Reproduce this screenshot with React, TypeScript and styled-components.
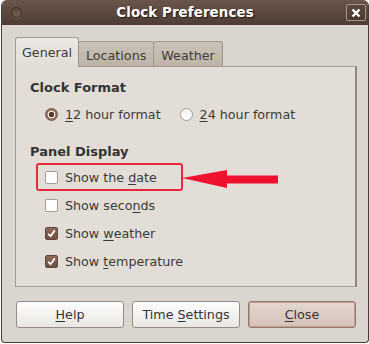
import styled, { createGlobalStyle } from 'styled-components';

const GlobalStyle = createGlobalStyle`
  html, body {
    margin: 0;
    padding: 0;
    background: #ffffff;
  }
  body {
    font-family: "DejaVu Sans", "Liberation Sans", sans-serif;
    font-size: 12.7px;
    color: #3a3a3a;
  }
`;

const Window = styled.div`
  box-sizing: border-box;
  width: 368px;
  height: 343px;
  margin-left: 1px;
  display: flex;
  flex-direction: column;
  background: #dad6cf;
  border: 1px solid #4a3f38;
  border-top: none;
  border-radius: 6px 6px 4px 4px;
  overflow: hidden;
`;

const TitleBar = styled.div`
  height: 25px;
  display: grid;
  grid-template-columns: 1fr auto 1fr;
  align-items: center;
  padding: 0 2px;
  background: linear-gradient(#6a5549, #4d3d34);
  box-sizing: border-box;
`;

const MenuDot = styled.span`
  width: 9px;
  height: 9px;
  margin-left: 7px;
  border-radius: 50%;
  border: 1px solid #3a2e28;
  background: linear-gradient(#5a473c, #73604f);
  box-shadow: 0 1px 0 rgba(255, 255, 255, 0.15);
`;

const Title = styled.div`
  color: #ffffff;
  font-weight: bold;
  font-size: 13.4px;
  text-shadow: 1px 1px 1px #1e1612;
  letter-spacing: 0.1px;
`;

const CloseBox = styled.div`
  justify-self: end;
  width: 20px;
  height: 17px;
  box-sizing: border-box;
  border: 1px solid #a6968b;
  border-radius: 2px;
  background: linear-gradient(#5c483d, #4a3a31);
  display: flex;
  align-items: center;
  justify-content: center;
`;

const Body = styled.div`
  padding: 12px 11px 0 13px;
  display: flex;
  flex-direction: column;
`;

const TabRow = styled.div`
  display: flex;
  align-items: flex-end;
  height: 30px;
  margin-bottom: -1px;
  position: relative;
  z-index: 1;
`;

const Tab = styled.div<{ $active?: boolean }>`
  box-sizing: border-box;
  padding: 0 ${(p) => (p.$active ? '6px' : '7px')};
  display: flex;
  align-items: center;
  height: ${(p) => (p.$active ? '30px' : '26px')};
  border: 1px solid ${(p) => (p.$active ? '#a39a90' : '#a0978c')};
  border-bottom: ${(p) => (p.$active ? 'none' : '1px solid #a39a90')};
  border-radius: 3px 3px 0 0;
  background: ${(p) =>
    p.$active ? 'linear-gradient(#ebe8e3, #e2ded7)' : 'linear-gradient(#cbc3b8, #bdb3a7)'};
  color: ${(p) => (p.$active ? '#3a3a3a' : '#3d3a37')};
  padding-top: ${(p) => (p.$active ? '0' : '2px')};
  margin-left: ${(p) => (p.$active ? '0' : '-1px')};
  &:first-child {
    margin-left: 0;
  }
`;

const Panel = styled.div`
  box-sizing: border-box;
  height: 221px;
  background: #e2ded7;
  border: 1px solid #a39a90;
  border-right: 2px solid #8e857b;
  padding: 12px 14px 0 14px;
  display: flex;
  flex-direction: column;
`;

const SectionTitle = styled.div`
  font-weight: bold;
  font-size: 13px;
  height: 18px;
  line-height: 18px;
  color: #333333;
`;

const RadioRow = styled.div`
  display: flex;
  gap: 19px;
  height: 28px;
  margin: 3px 0 15px 15px;
  align-items: center;
`;

const Option = styled.label`
  display: flex;
  align-items: center;
  gap: 7px;
`;

const Radio = styled.span<{ $checked?: boolean }>`
  box-sizing: border-box;
  width: 13px;
  height: 13px;
  border-radius: 50%;
  border: 1px solid ${(p) => (p.$checked ? '#6d5446' : '#a59c94')};
  background: ${(p) =>
    p.$checked
      ? 'radial-gradient(circle, #573b30 0 2.4px, #efe3dc 3px 3.6px, #957363 4.2px)'
      : 'linear-gradient(#f4f3f1, #ffffff)'};
`;

const CheckList = styled.div`
  display: flex;
  flex-direction: column;
  margin-top: 2px;
`;

const CheckRow = styled.label<{ $marked?: boolean }>`
  position: relative;
  box-sizing: border-box;
  display: flex;
  align-items: center;
  gap: 7px;
  height: 28px;
  margin-left: 6px;
  padding-left: 9px;
  width: ${(p) => (p.$marked ? '147px' : 'auto')};
  border-radius: 3px;
  box-shadow: ${(p) => (p.$marked ? 'inset 0 0 0 2px #e8283c' : 'none')};
`;

const Box = styled.span<{ $checked?: boolean }>`
  box-sizing: border-box;
  width: 13px;
  height: 13px;
  border-radius: 2px;
  border: 1px solid ${(p) => (p.$checked ? '#5f4538' : '#a39a92')};
  background: ${(p) => (p.$checked ? 'linear-gradient(#8e6a58, #6f4f40)' : '#ffffff')};
  display: flex;
  align-items: center;
  justify-content: center;
`;

const Arrow = styled.svg`
  position: absolute;
  left: 145px;
  top: 5px;
`;

const Key = styled.span`
  text-decoration: underline;
  text-underline-offset: 2px;
  text-decoration-thickness: 1px;
`;

const ButtonRow = styled.div`
  display: flex;
  gap: 8px;
  margin-top: 14px;
  padding-left: 1px;
`;

const Button = styled.div<{ $primary?: boolean }>`
  box-sizing: border-box;
  width: 108px;
  height: 27px;
  display: flex;
  align-items: center;
  justify-content: center;
  border: 1px solid ${(p) => (p.$primary ? '#8c7a72' : '#958d85')};
  border-radius: 3px;
  background: ${(p) =>
    p.$primary ? 'linear-gradient(#e4d6d0, #d5c1b9)' : 'linear-gradient(#fdfdfc, #e9e7e3)'};
  box-shadow: ${(p) => (p.$primary ? 'inset 0 0 0 1px #c99b8e' : 'inset 0 1px 0 #ffffff')};
  color: #333333;
`;

const Check = () => (
  <svg width="9" height="9" viewBox="0 0 9 9">
    <path d="M1.2 4.8 L3.6 7.2 L7.8 1.4" fill="none" stroke="#ffffff" strokeWidth="1.8" />
  </svg>
);

const App = () => (
  <>
    <GlobalStyle />
    <Window>
      <TitleBar>
        <MenuDot />
        <Title>Clock Preferences</Title>
        <CloseBox>
          <svg width="10" height="10" viewBox="0 0 10 10">
            <path d="M1.5 1.5 L8.5 8.5 M8.5 1.5 L1.5 8.5" stroke="#ffffff" strokeWidth="2.4" />
          </svg>
        </CloseBox>
      </TitleBar>
      <Body>
        <TabRow>
          <Tab $active>General</Tab>
          <Tab>Locations</Tab>
          <Tab>Weather</Tab>
        </TabRow>
        <Panel>
          <SectionTitle>Clock Format</SectionTitle>
          <RadioRow>
            <Option>
              <Radio $checked />
              <span><Key>1</Key>2 hour format</span>
            </Option>
            <Option>
              <Radio />
              <span><Key>2</Key>4 hour format</span>
            </Option>
          </RadioRow>
          <SectionTitle>Panel Display</SectionTitle>
          <CheckList>
            <CheckRow $marked>
              <Box />
              <span>Show the <Key>d</Key>ate</span>
              <Arrow width="98" height="22" viewBox="0 0 98 22">
                <polygon points="1,10 46,2 46,7.5 97,7.5 97,15.5 46,15.5 46,20" fill="#f0112f" />
              </Arrow>
            </CheckRow>
            <CheckRow>
              <Box />
              <span>Show seco<Key>n</Key>ds</span>
            </CheckRow>
            <CheckRow>
              <Box $checked><Check /></Box>
              <span>Show <Key>w</Key>eather</span>
            </CheckRow>
            <CheckRow>
              <Box $checked><Check /></Box>
              <span>Show <Key>t</Key>emperature</span>
            </CheckRow>
          </CheckList>
        </Panel>
        <ButtonRow>
          <Button><span><Key>H</Key>elp</span></Button>
          <Button><span>Time <Key>S</Key>ettings</span></Button>
          <Button $primary><span><Key>C</Key>lose</span></Button>
        </ButtonRow>
      </Body>
    </Window>
  </>
);

export default App;
